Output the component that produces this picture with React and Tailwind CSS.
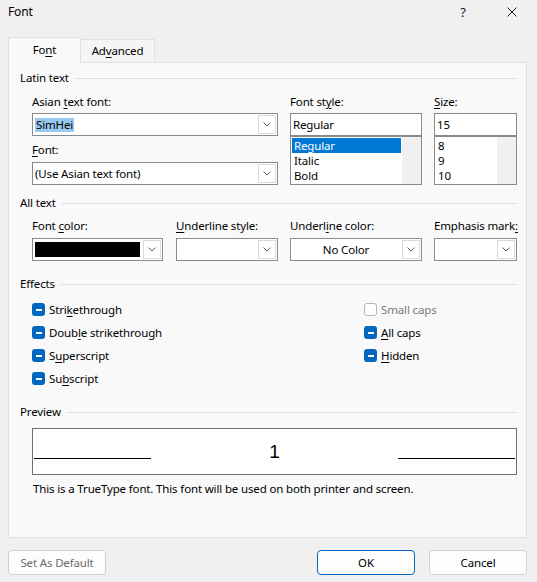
import clsx from 'clsx'

// Access-key letter, underlined the way Win32 dialogs draw it
const Key = ({ children }) => (
  <span className="underline decoration-1 underline-offset-[2px]">{children}</span>
)

const Chevron = () => (
  <svg width="8" height="5" viewBox="0 0 8 5" className="text-[#606060]">
    <path d="M0.5 0.5 L4 4 L7.5 0.5" fill="none" stroke="currentColor" strokeWidth="1" />
  </svg>
)

const DropButton = () => (
  <div className="m-px flex w-[18px] items-center justify-center border border-[#dadada] bg-white">
    <Chevron />
  </div>
)

const Combo = ({ className = '', center = false, children }) => (
  <div className={clsx('flex h-[23px] border border-[#8a8a8a] bg-white', className)}>
    <div
      className={clsx(
        'flex min-w-0 flex-1 items-center px-[2px]',
        center && 'justify-center'
      )}
    >
      {children}
    </div>
    <DropButton />
  </div>
)

const Label = ({ className = '', children }) => (
  <div className={clsx('h-4 leading-4 whitespace-nowrap', className)}>{children}</div>
)

const Section = ({ title, className = '' }) => (
  <div className={clsx('flex h-4 items-center pl-[11px] pr-[9px]', className)}>
    <span className="leading-4">{title}</span>
    <div className="ml-[6px] h-px flex-1 bg-[#dcdcdc]" />
  </div>
)

const ListBox = ({ items, selected, className = '' }) => (
  <div className={clsx('flex h-[49px] border border-[#8a8a8a] bg-white', className)}>
    <div className="flex-1 p-px">
      {items.map((item) => (
        <div
          key={item}
          className={clsx(
            'h-[15px] overflow-hidden pl-[2px] leading-[15px]',
            item === selected && 'bg-[#0078d4] text-white'
          )}
        >
          {item}
        </div>
      ))}
    </div>
    <div className="w-[19px] bg-[#f0f0f0]" />
  </div>
)

const Check = ({ checked = true, disabled = false, children }) => (
  <div className="flex h-[23px] items-center">
    {checked ? (
      <div className="flex h-[13px] w-[13px] items-center justify-center rounded-[3px] bg-[#0067c0]">
        <div className="h-[2px] w-[6px] bg-white" />
      </div>
    ) : (
      <div className="h-[13px] w-[13px] rounded-[3px] border border-[#b5b5b5] bg-white" />
    )}
    <span className={clsx('ml-[4px] leading-4', disabled && 'text-[#7a7a7a]')}>{children}</span>
  </div>
)

const DialogButton = ({ primary = false, disabled = false, className = '', children }) => (
  <button
    type="button"
    className={clsx(
      'h-[25px] w-[98px] rounded-[4px] border bg-[#fdfdfd] leading-4',
      primary ? 'border-[#0067c0]' : 'border-[#d0d0d0]',
      disabled ? 'text-[#6d6d6d]' : 'text-black',
      className
    )}
  >
    {children}
  </button>
)

export default function App() {
  return (
    <div className="flex h-[582px] w-[537px] flex-col bg-[#f0f0f0] font-['Noto_Sans',sans-serif] text-[11.5px] tracking-[-0.15px] text-black">
      {/* title bar */}
      <div className="flex h-[30px] items-start pt-[4px] pl-[8px]">
        <span className="text-[12px] leading-4">Font</span>
        <span className="ml-auto w-[10px] text-center text-[13px] leading-4 text-[#1a1a1a]">?</span>
        <div className="ml-[39px] mr-[20px] mt-[3px]">
          <svg width="10" height="10" viewBox="0 0 10 10">
            <path d="M0.5 0.5 L9.5 9.5 M9.5 0.5 L0.5 9.5" stroke="#1a1a1a" strokeWidth="1" />
          </svg>
        </div>
      </div>

      {/* tabs */}
      <div className="flex h-[32px] items-end pl-[8px]">
        <div className="relative z-10 -mb-px flex h-[26px] w-[73px] items-center justify-center border-x border-t border-[#e0e0e0] bg-[#f9f9f9] pb-px">
          Fo<Key>n</Key>t
        </div>
        <div className="flex h-[23px] w-[74px] items-center justify-center border-r border-t border-[#e0e0e0] bg-[#f5f5f5]">
          Ad<Key>v</Key>anced
        </div>
      </div>

      {/* tab page */}
      <div className="ml-[8px] mr-[10px] h-[476px] border border-[#e0e0e0] bg-[#f9f9f9] pt-[7px]">
        <Section title="Latin text" />
        <div className="mt-2 flex pl-[23px]">
          <div className="w-[246px]">
            <Label>
              Asian <Key>t</Key>ext font:
            </Label>
            <Combo className="mt-[3px]">
              <span className="bg-[#99c9ef] px-px leading-[14px]">SimHei</span>
            </Combo>
            <Label className="mt-[6px]">
              <Key>F</Key>ont:
            </Label>
            <Combo className="mt-[4px]">(Use Asian text font)</Combo>
          </div>
          <div className="ml-[12px] w-[132px]">
            <Label>
              Font st<Key>y</Key>le:
            </Label>
            <div className="mt-[3px] flex h-[23px] items-center border border-[#8a8a8a] bg-white px-[2px]">
              Regular
            </div>
            <ListBox items={['Regular', 'Italic', 'Bold']} selected="Regular" />
          </div>
          <div className="ml-[12px] w-[83px]">
            <Label>
              <Key>S</Key>ize:
            </Label>
            <div className="mt-[3px] flex h-[23px] items-center border border-[#8a8a8a] bg-white px-[2px]">
              15
            </div>
            <ListBox items={['8', '9', '10']} />
          </div>
        </div>

        <Section title="All text" className="mt-[10px]" />
        <div className="mt-[7px] flex pl-[23px]">
          <div className="w-[131px]">
            <Label>
              Font <Key>c</Key>olor:
            </Label>
            <Combo className="mt-[4px]">
              <div className="h-[15px] w-[106px] bg-black" />
            </Combo>
          </div>
          <div className="ml-[13px] w-[102px]">
            <Label>
              <Key>U</Key>nderline style:
            </Label>
            <Combo className="mt-[4px]" />
          </div>
          <div className="ml-[12px] w-[132px]">
            <Label>
              Underl<Key>i</Key>ne color:
            </Label>
            <Combo className="mt-[4px]" center>
              No Color
            </Combo>
          </div>
          <div className="ml-[12px] w-[83px]">
            <Label>
              Emphasis mark<Key>:</Key>
            </Label>
            <Combo className="mt-[4px]" />
          </div>
        </div>

        <Section title="Effects" className="mt-[15px]" />
        <div className="mt-[6px] flex pl-[23px]">
          <div className="w-[332px]">
            <Check>
              Stri<Key>k</Key>ethrough
            </Check>
            <Check>
              Doub<Key>l</Key>e strikethrough
            </Check>
            <Check>
              S<Key>u</Key>perscript
            </Check>
            <Check>
              Su<Key>b</Key>script
            </Check>
          </div>
          <div>
            <Check checked={false} disabled>
              Small caps
            </Check>
            <Check>
              <Key>A</Key>ll caps
            </Check>
            <Check>
              <Key>H</Key>idden
            </Check>
          </div>
        </div>

        <Section title="Preview" className="mt-[14px]" />
        <div className="ml-[23px] mt-[8px] flex h-[47px] w-[485px] border border-[#6f6f6f] bg-white px-px">
          <div className="h-[30px] w-[117px] border-b border-black" />
          <div className="flex flex-1 justify-center">
            <span className="mt-[11px] font-['Liberation_Sans',sans-serif] text-[19px] leading-[24px] tracking-normal">1</span>
          </div>
          <div className="h-[30px] w-[117px] border-b border-black" />
        </div>
        <div className="ml-[24px] mt-[6px] leading-4">
          This is a TrueType font. This font will be used on both printer and screen.
        </div>
      </div>

      {/* dialog buttons */}
      <div className="mt-[12px] flex pl-[8px]">
        <DialogButton disabled>Set As Default</DialogButton>
        <DialogButton primary className="ml-auto">
          OK
        </DialogButton>
        <DialogButton className="ml-[14px] mr-[10px]">Cancel</DialogButton>
      </div>
    </div>
  )
}
